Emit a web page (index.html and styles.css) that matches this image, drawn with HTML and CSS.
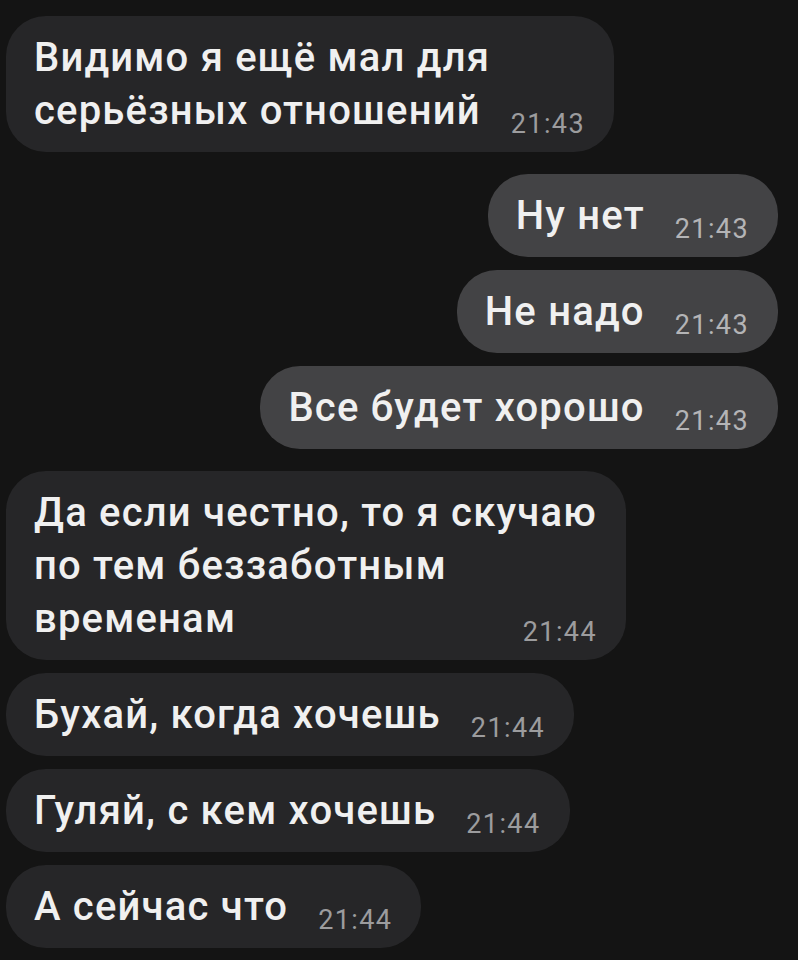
FILE: index.html
```html
<!DOCTYPE html>
<html lang="ru">
<head>
    <meta charset="UTF-8">
    <meta name="viewport" content="width=device-width, initial-scale=1.0">
    <title>Чат</title>
    <link rel="stylesheet" href="styles.css">
</head>
<body>
    <div class="chat">
        <div class="grupo">
            <div class="mensaje entrante">Видимо я ещё мал для<br>серьёзных отношений<span class="hora">21:43</span></div>
        </div>

        <div class="grupo">
            <div class="mensaje saliente">Ну нет<span class="hora">21:43</span></div>
            <div class="mensaje saliente">Не надо<span class="hora">21:43</span></div>
            <div class="mensaje saliente">Все будет хорошо<span class="hora">21:43</span></div>
        </div>

        <div class="grupo">
            <div class="mensaje entrante">Да если честно, то я скучаю<br>по тем беззаботным<br>временам<span class="hora">21:44</span></div>
            <div class="mensaje entrante">Бухай, когда хочешь<span class="hora">21:44</span></div>
            <div class="mensaje entrante">Гуляй, с кем хочешь<span class="hora">21:44</span></div>
            <div class="mensaje entrante">А сейчас что<span class="hora">21:44</span></div>
        </div>
    </div>
</body>
</html>
```

FILE: styles.css
```css
body {
    margin: 0;
    background-color: #141414;
    font-family: Roboto, 'Noto Sans', sans-serif;
    color: #f0f0f0;
}

.chat {
    display: flex;
    flex-direction: column;
    gap: 22px;
    padding: 16px 20px 0 6px;
}

.grupo {
    display: flex;
    flex-direction: column;
    gap: 13px;
}

.mensaje {
    font-size: 40px;
    font-weight: 500;
    letter-spacing: 1.2px;
    line-height: 53px;
    padding: 15px 29px 15px 28px;
    border-radius: 40px;
    white-space: nowrap;
}

.entrante {
    align-self: flex-start;
    background-color: #262628;
}

.saliente {
    align-self: flex-end;
    background-color: #434345;
}

/* hora del mensaje, siempre al final de la ultima linea */
.hora {
    float: right;
    margin-left: 30px;
    padding-top: 27px;
    font-size: 27px;
    font-weight: 400;
    letter-spacing: 1.4px;
    line-height: 26px;
    color: #9c9c9e;
}

.saliente .hora {
    color: #b4b4b6;
}
```
